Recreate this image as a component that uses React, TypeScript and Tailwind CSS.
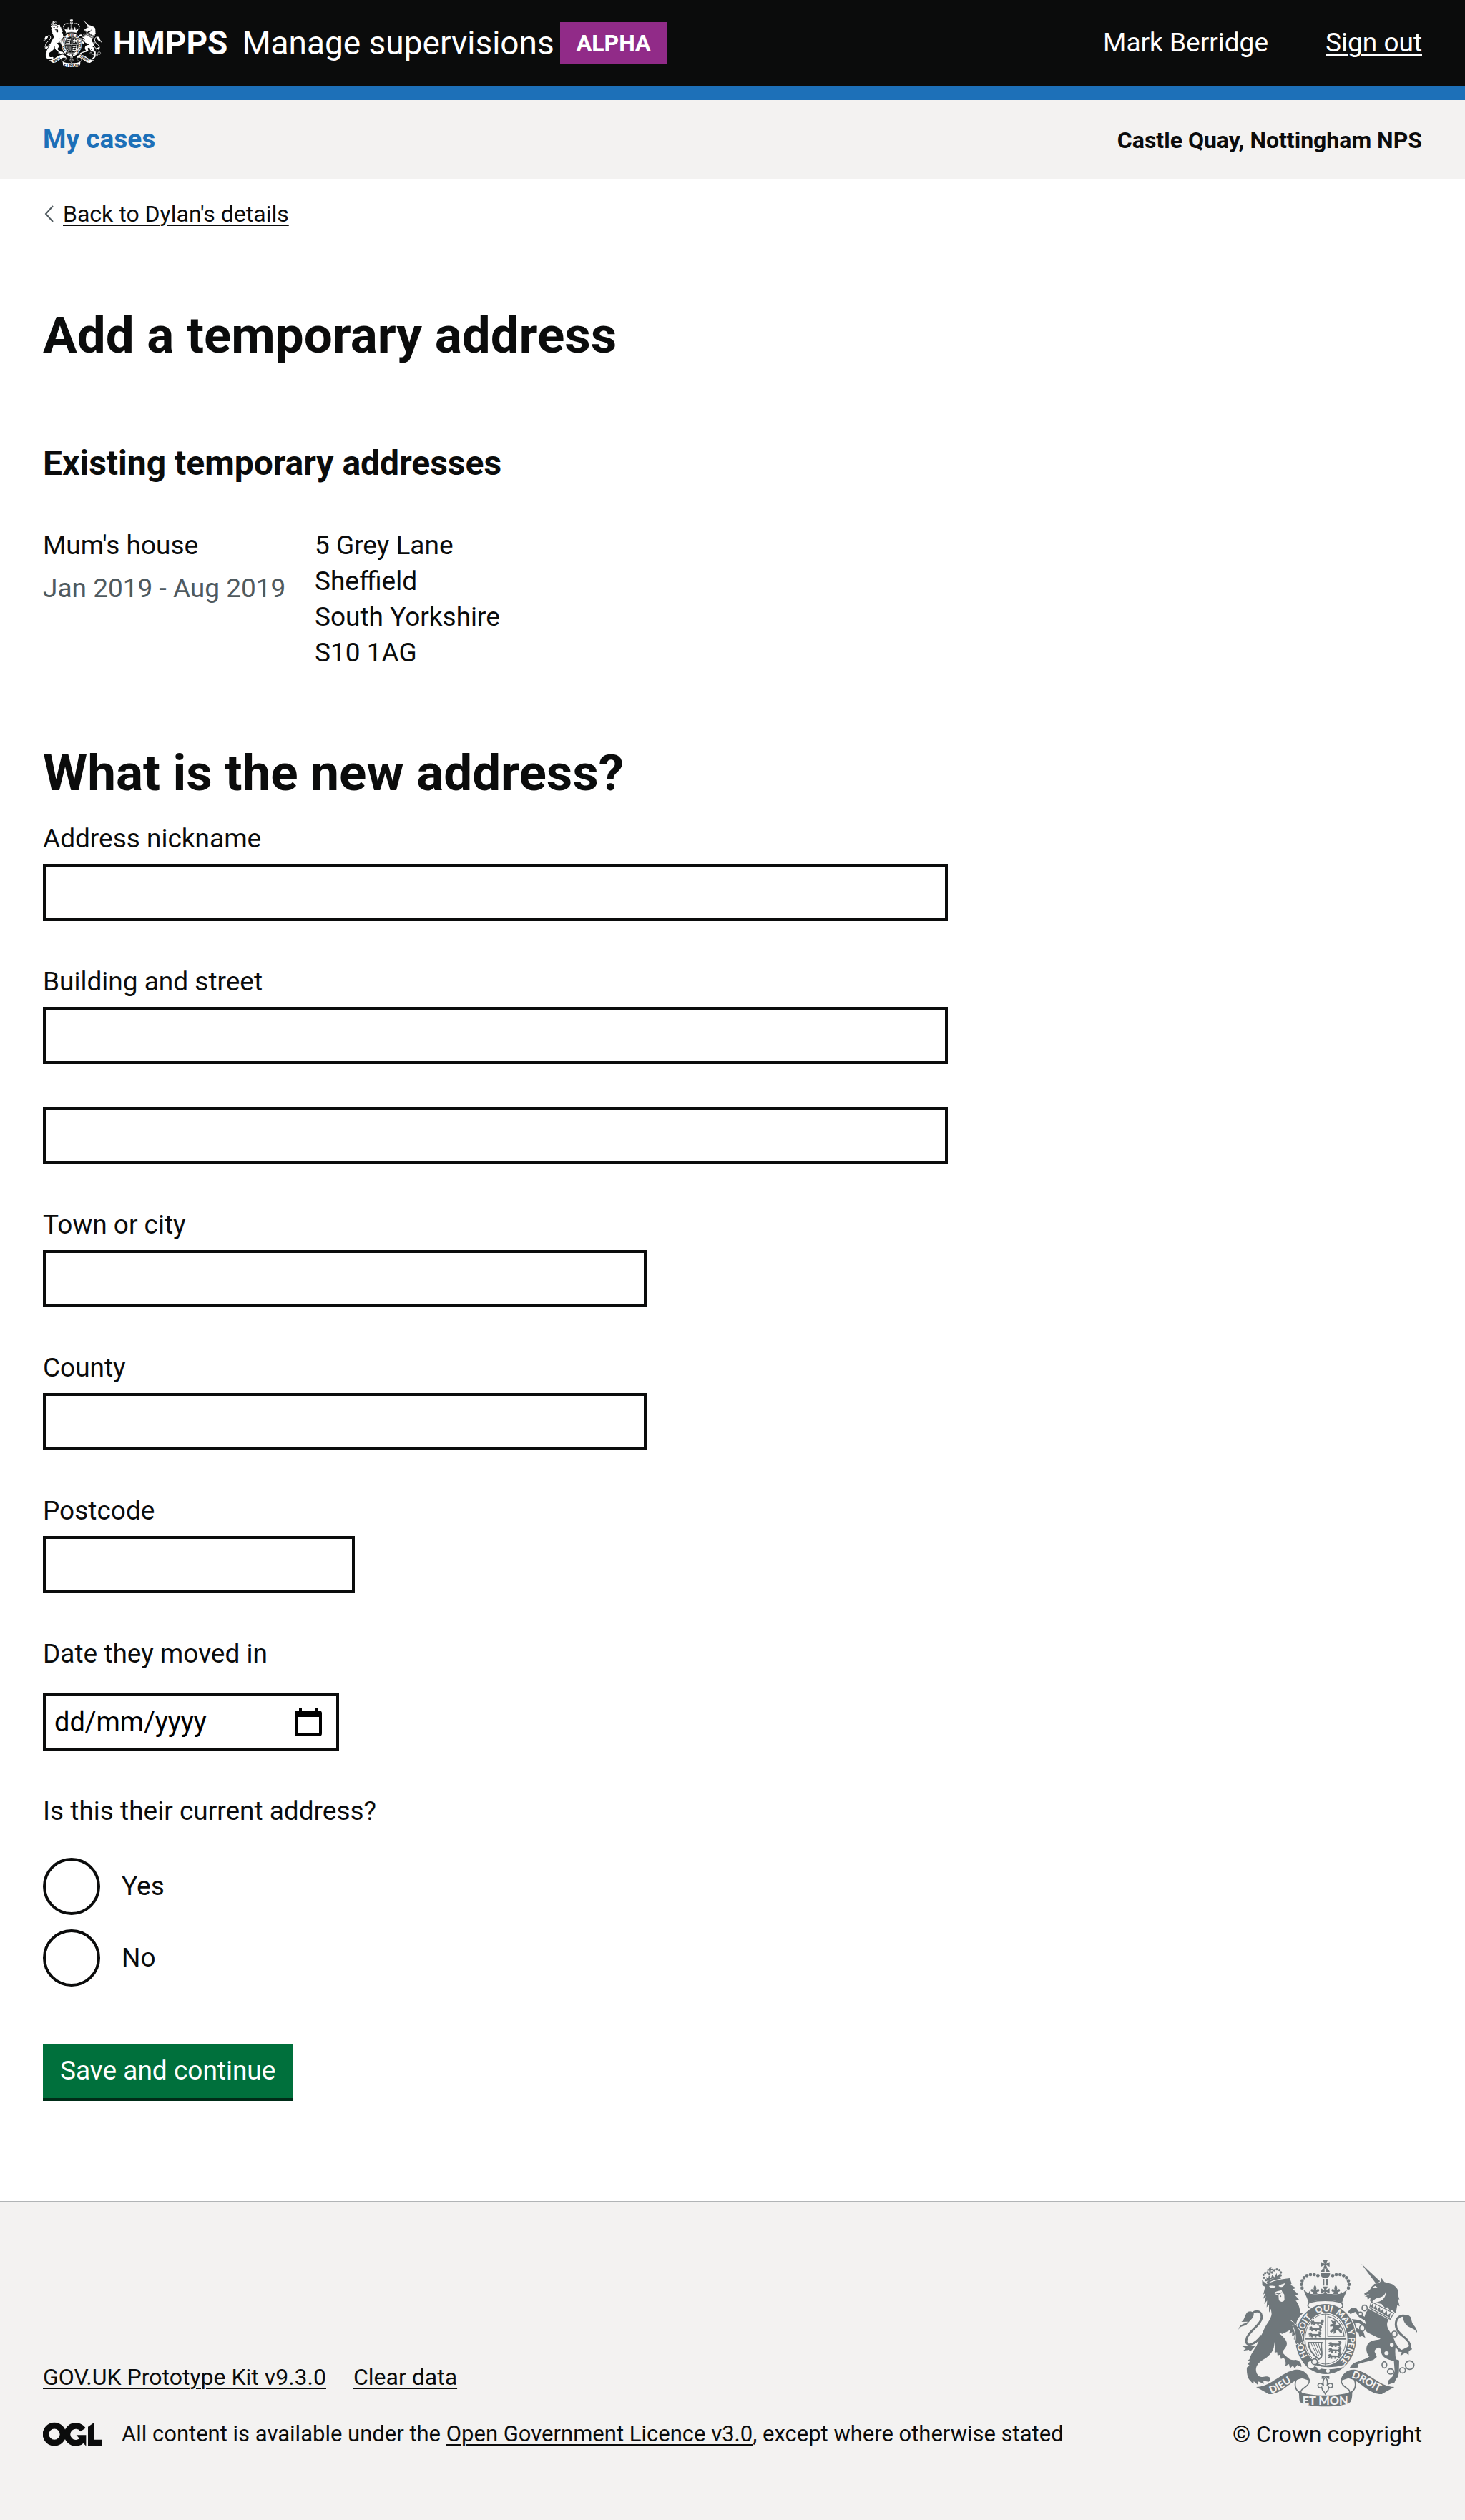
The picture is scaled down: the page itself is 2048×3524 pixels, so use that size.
import type { ReactNode } from "react";

type CrestProps = { ink: string; ground: string; title: string; className: string; id: string };

const CROWN_PEARLS: [number, number][] = [
  [490, 364], [475, 360], [459, 360], [444, 364], [432, 373], [424, 386], [421, 401], [424, 416],
  [552, 364], [567, 360], [583, 360], [598, 364], [610, 373], [618, 386], [621, 401], [618, 416],
];
const LION_CROWN_PEARLS: [number, number][] = [
  [137, 98], [129, 88], [127, 76], [134, 68], [144, 66], [152, 71], [163, 66], [172, 57], [183, 53], [194, 56], [200, 66], [199, 78],
];

function Passant({ x, y }: { x: number; y: number }) {
  return (
    <path
      transform={`translate(${x} ${y})`}
      d="M0 8L4 2L12 0L16 6L38 7C46 6 46 0 40 -3L52 -4C58 4 54 10 48 12L54 20L46 20L40 14L34 14L34 21L26 20L28 14L18 14L18 21L10 20L12 13L4 18L0 14L6 10Z"
    />
  );
}

function Pattee({ x, y, s }: { x: number; y: number; s: number }) {
  return (
    <path
      transform={`translate(${x} ${y}) scale(${s})`}
      d="M-10 -18L10 -18L3 -3L18 -10L18 10L3 3L10 18L-10 18L-3 3L-18 10L-18 -10L-3 -3Z"
    />
  );
}

function Fleur({ x, y }: { x: number; y: number }) {
  return (
    <path
      transform={`translate(${x} ${y})`}
      d="M0 -16C6 -8 8 -2 4 8C8 0 16 0 18 6C18 12 12 14 8 12L10 22L-10 22L-8 12C-12 14 -18 12 -18 6C-16 0 -8 0 -4 8C-8 -2 -6 -8 0 -16Z"
    />
  );
}

function Crest({ ink, ground, title, className, id }: CrestProps) {
  return (
    <svg viewBox="156 298 750 616" className={className} role="img" aria-label={title}>
      <defs>
        <path id={`${id}-belt`} d="M523 746A96 116 0 0 1 523 514A96 116 0 0 1 523 746" />
        <path id={`${id}-dieu`} d="M294 859C336 846 364 814 412 794" />
        <path id={`${id}-droit`} d="M630 791C676 803 706 838 780 864" />
      </defs>

      {/* Lion */}
      <g transform="translate(135 285)" fill={ink}>
        <path d="M78 238C100 220 122 230 119 258C114 290 56 316 54 352C54 378 86 374 120 330" fill="none" stroke={ink} strokeWidth="9" />
        <path d="M22 306C26 280 44 284 62 272L34 273C46 266 48 248 56 236C66 224 82 228 86 240C86 256 72 266 56 284C44 292 30 288 22 306Z" />
        <path d="M54 372L36 374L54 383L42 394L66 390L70 399L94 372Z" />
        <path d="M140 114L121 98L122 120L134 126L130 142L126 158L135 152L124 178L137 166L130 198L142 184L140 212L150 200L150 234L158 218L161 240C158 262 142 278 132 298C122 322 108 350 98 372C86 392 72 412 68 430L61 434L70 440L60 448L68 456L57 464C56 482 58 500 66 514L84 534L86 522L102 536L106 523L128 533L126 520L148 524C160 518 158 503 142 502C128 500 122 508 110 502C98 494 92 478 97 462C102 448 112 440 128 430C148 418 166 400 170 380L174 356C180 372 172 388 174 402L184 400L186 414L196 410L200 428L212 424C220 436 222 446 218 458L234 450L238 468L250 456L258 468L268 454L286 462C287 444 276 434 262 432C246 434 238 432 230 424C220 414 206 406 208 396C216 384 228 376 224 358C220 344 208 334 190 318L206 323L222 316L240 306L234 322L248 316L246 332L258 328L254 346L264 352L262 368L274 362L278 376L287 366L296 370L299 350C298 330 290 306 276 292L264 280C268 262 278 248 293 236L281 234C279 214 274 198 262 184L278 182L258 160L274 158L250 136L264 131L240 118L245 112L237 90C205 92 165 102 140 114Z" />
        <g fill={ground}>
          <path d="M150 123C160 120 170 122 178 124C172 134 158 134 150 123Z" />
          <path d="M190 123C198 114 208 116 216 110C216 124 202 132 190 123Z" />
          <path d="M172 152C180 142 192 146 202 138L206 148L214 158L215 180C212 192 192 192 191 178L190 162C186 158 178 160 172 152Z" />
        </g>
        <path d="M178 152L190 156L204 150M196 158L200 168" fill="none" stroke={ink} strokeWidth="4" />
        <path d="M237 263L278 296C288 308 292 326 294 340" fill="none" stroke={ground} strokeWidth="3" />
        <path d="M140 105C158 92 178 86 199 86L200 92C178 94 160 101 143 113Z" />
        <path d="M142 102L138 84L146 92L150 78L158 90L164 74L172 86L182 68L184 82L194 72L198 86C176 86 158 92 142 102Z" />
        {LION_CROWN_PEARLS.map(([x, y]) => <circle key={`${x}-${y}`} cx={x} cy={y} r="5" />)}
        <path d="M149 45L161 43L158 51L166 50L167 58L158 57L158 68L152 68L151 58L143 60L143 52L151 52Z" />
      </g>

      {/* Unicorn */}
      <g transform="translate(495 285)" fill={ink}>
        <path d="M177 29L256 103L240 114Z" />
        <path d="M262 89L274 106L304 114C318 120 330 134 333 146L330 156L337 180L330 176L338 208L328 202L322 238L304 222L300 230L288 212L276 214L262 198L222 190L214 186L216 170L204 180L202 168L192 166L190 152C206 146 214 140 218 128L232 114L250 110L258 104Z" />
        <path d="M278 136C284 156 268 170 250 172C236 174 226 184 220 194L238 192C268 186 286 168 278 136Z" fill={ground} />
        <path d="M224 128L236 122L246 130L234 130Z" fill={ground} />
        <path d="M192 164L208 158" stroke={ground} strokeWidth="4" />
        <path d="M219 189L313 237L298 262L212 214Z" fill={ground} stroke={ink} strokeWidth="4" />
        <path d="M217 210L224 196L230 214L238 202L244 222L254 210L258 230L268 218L272 238L284 226L286 246L300 236L296 256Z" />
        <path d="M208 218L292 263C282 278 284 292 292 306C304 328 324 352 321 378C318 396 320 412 322 430L336 434L335 482L332 502L322 514L316 528L302 532L290 536L290 520L308 502L317 480L314 438C298 432 272 426 264 410C258 398 264 388 252 380C236 384 228 394 236 404L242 420L228 432C200 440 180 444 164 450L162 464L128 467C134 452 146 444 160 440L198 426L211 418C194 402 194 370 212 358C228 346 250 350 258 344L204 318C192 308 188 292 198 284L190 262C190 246 196 232 208 218Z" />
        <path d="M202 266L172 248L154 224L130 228" fill="none" stroke={ink} strokeWidth="13" />
        <path d="M120 232L136 214L156 216L150 232L132 240Z" />
        <path d="M204 296L170 272L140 268L152 302L184 326" fill="none" stroke={ink} strokeWidth="13" />
        <path d="M160 300L186 314L194 340L180 332L170 336Z" />
        <path d="M318 364C338 408 384 410 381 370C376 336 324 330 322 284C322 254 344 240 366 250" fill="none" stroke={ink} strokeWidth="9" />
        <path d="M352 250C366 236 388 246 388 268C392 290 410 292 412 320C402 300 380 300 366 286C356 276 352 262 352 250Z" />
        <path d="M384 372L390 388L376 394L376 412L362 402L340 416L348 398L330 398Z" />
        <g fill={ground}>
          <ellipse cx="283" cy="404" rx="9" ry="8" />
          <ellipse cx="305" cy="369" rx="8" ry="9" />
        </g>
        <g fill={ground} stroke={ink} strokeWidth="5">
          <ellipse cx="191" cy="215" rx="11" ry="12" />
          <ellipse cx="173" cy="240" rx="9" ry="8" />
          <ellipse cx="181" cy="299" rx="11" ry="13" />
          <ellipse cx="316" cy="324" rx="11" ry="12" />
          <ellipse cx="274" cy="453" rx="10" ry="13" />
          <ellipse cx="300" cy="481" rx="13" ry="11" />
          <ellipse cx="350" cy="476" rx="12" ry="11" />
          <circle cx="380" cy="454" r="18" />
        </g>
      </g>

      {/* Royal crown */}
      <g fill={ink}>
        <Pattee x={521} y={317} s={1} />
        <path d="M509 336L518 336L518 348L502 348ZM524 336L533 336L540 348L524 348Z" />
        <path d="M501 353L541 353C541 368 534 373 521 373C508 373 501 368 501 353Z" />
        {CROWN_PEARLS.map(([x, y]) => <circle key={`${x}-${y}`} cx={x} cy={y} r="7" />)}
        <path d="M511 378H517V406H511ZM525 378H531V406H525Z" />
        <Pattee x={521} y={428} s={1} />
        <Fleur x={478} y={419} />
        <Fleur x={565} y={419} />
        <path d="M430 424L450 438L456 428L460 448L440 448ZM612 424L592 438L586 428L582 448L602 448Z" />
        <path d="M436 436C470 446 480 440 521 440C562 440 572 446 606 436C602 452 594 462 592 477C548 463 494 463 450 477C448 462 440 452 436 436Z" />
        <path d="M456 476C440 490 452 502 466 502L578 502C592 502 602 490 586 476C540 466 500 466 456 476Z" fill={ground} stroke={ink} strokeWidth="5" />
      </g>

      {/* Garter and shield */}
      <ellipse cx="523" cy="630" rx="131" ry="151" fill={ground} />
      <ellipse cx="523" cy="630" rx="127" ry="147" fill={ink} />
      <ellipse cx="523" cy="630" rx="91" ry="110" fill={ground} />
      <ellipse cx="522" cy="630" rx="86" ry="105" fill="none" stroke={ink} strokeWidth="3" />
      <g fill={ink}>
        <path d="M520 524H525V740H520ZM436 627H608V632H436Z" />
        <Passant x={460} y={552} />
        <Passant x={452} y={577} />
        <Passant x={450} y={602} />
        <Passant x={534} y={642} />
        <Passant x={534} y={667} />
        <Passant x={532} y={692} />
        <path d="M532 536C570 542 596 580 600 618L532 618Z" fill="none" stroke={ink} strokeWidth="4" />
        <path d="M544 548L554 556L564 552L568 562L562 570L576 572L586 566L588 578L576 584L590 594L592 606L582 602L574 592L564 590L566 604L556 608L556 596L546 604L540 598L552 586L554 576L542 578L540 570L552 566Z" />
        <path d="M450 645L506 645C500 660 512 690 504 706L494 714C474 700 452 676 450 645Z" fill="none" stroke={ink} strokeWidth="6" />
        <path d="M462 648L486 698M472 648L494 700M482 648L500 696M492 648L502 682" stroke={ink} strokeWidth="3" />
      </g>
      <g fill={ground} fontFamily="Lato, sans-serif" fontWeight="900" fontSize="36" textAnchor="middle">
        <text><textPath href={`#${id}-belt`} startOffset="18%">HO</textPath></text>
        <text><textPath href={`#${id}-belt`} startOffset="34%">SOIT</textPath></text>
        <text><textPath href={`#${id}-belt`} startOffset="49%">QUI</textPath></text>
        <text><textPath href={`#${id}-belt`} startOffset="62%">MAL</textPath></text>
        <text><textPath href={`#${id}-belt`} startOffset="71%">Y</textPath></text>
        <text><textPath href={`#${id}-belt`} startOffset="82%">PENSE</textPath></text>
      </g>
      <g fill={ground}>
        <circle cx="495" cy="750" r="8" />
        <circle cx="532" cy="763" r="8" />
        <path d="M478 738C510 752 560 750 600 738L612 742C570 760 510 762 474 744Z" />
      </g>
      <circle cx="462" cy="737" r="18" fill={ground} stroke={ink} strokeWidth="5" />
      <circle cx="476" cy="725" r="12" fill={ground} stroke={ink} strokeWidth="5" />
      {/* Lion's paw over the garter */}
      <path d="M398 568C414 590 424 610 426 632L434 650L420 644L416 658L406 648L398 654L394 640C400 622 394 596 384 574Z" fill={ink} stroke={ground} strokeWidth="3" />

      {/* Pendant */}
      <path d="M506 783H538V798L530 794L521 786L512 794L506 798Z" fill={ink} />
      <path d="M521 790C534 804 532 816 528 828C534 812 552 812 552 826C550 836 540 836 536 832L532 846L527 850L521 860L515 850L510 846L506 832C502 836 492 836 490 826C490 812 508 812 514 828C510 816 508 804 521 790Z" fill={ground} stroke={ink} strokeWidth="5" />

      {/* Motto ribbon */}
      <g stroke={ink} strokeWidth="5" fill={ground}>
        <path d="M408 786C392 806 388 836 410 852L420 856C410 836 456 834 454 802Z" />
        <path d="M634 786C650 806 654 836 632 852L622 856C632 836 586 834 588 802Z" />
      </g>
      <g fill={ink}>
        <path d="M231 831C292 830 334 772 392 759C428 753 452 776 457 806C438 788 418 794 396 804C352 830 330 862 284 861Z" />
        <path d="M811 831C750 830 708 772 650 759C614 753 590 776 585 806C604 788 624 794 646 804C690 830 712 862 758 861Z" />
        <path d="M409 848C450 872 592 872 634 848C634 868 634 886 624 896C592 918 450 918 418 896C408 886 414 866 409 848Z" />
      </g>
      <g fill={ground} fontFamily="Lato, sans-serif" fontWeight="900" fontSize="42">
        <text><textPath href={`#${id}-dieu`}>DIEU</textPath></text>
        <text><textPath href={`#${id}-droit`}>DROIT</textPath></text>
        <text x="521" y="905" fontSize="49" textAnchor="middle">ET MON</text>
      </g>
    </svg>
  );
}

function OglLogo() {
  return (
    <svg viewBox="60 42 246 101" className="h-[34px] w-[82px] shrink-0" role="img" aria-label="Open Government Licence">
      <g fill="none" stroke="#0b0c0c" strokeWidth="26">
        <circle cx="108" cy="93" r="36" />
        <path d="M228 74A36 36 0 1 0 226 116" />
      </g>
      <path d="M200 96H241V142L226 128L214 112Z" fill="#0b0c0c" />
      <path d="M249 62L276 43V116H306V142H249Z" fill="#0b0c0c" />
    </svg>
  );
}

function CalendarIcon() {
  return (
    <svg viewBox="0 0 38 40" className="h-[40px] w-[38px]" aria-hidden="true">
      <path
        fillRule="evenodd"
        fill="#000"
        d="M6 0H10V4H28V0H32V4H34Q38 4 38 8V36Q38 40 34 40H4Q0 40 0 36V8Q0 4 4 4H6ZM4 13V36H34V13Z"
      />
    </svg>
  );
}

const inputBox = "block h-20 border-4 border-[#0b0c0c] bg-white px-2";

function Field({ id, label, width }: { id: string; label: string; width: string }) {
  return (
    <div className="mb-[60px]">
      <label htmlFor={id} className="mb-2.5 block">{label}</label>
      <input id={id} name={id} type="text" className={`${inputBox} ${width}`} />
    </div>
  );
}

function Choice({ id, label }: { id: string; label: string }) {
  return (
    <div className="flex items-center gap-[30px]">
      <input
        id={id}
        type="radio"
        name="current"
        value={id}
        className="size-20 appearance-none rounded-full border-4 border-[#0b0c0c] bg-white checked:shadow-[inset_0_0_0_16px_#fff,inset_0_0_0_40px_#0b0c0c]"
      />
      <label htmlFor={id}>{label}</label>
    </div>
  );
}

function TextLink({ children }: { children: ReactNode }) {
  return (
    <a href="#" className="underline decoration-2 underline-offset-4">{children}</a>
  );
}

export default function App() {
  return (
    <div className="flex min-h-screen flex-col bg-white font-['Roboto',sans-serif] text-[37px] leading-[50px] text-[#0b0c0c]">
      <header>
        <div className="flex items-center justify-between border-b-[20px] border-[#1d70b8] bg-[#0b0c0c] px-[60px] py-[30px] text-white">
          <div className="flex items-center">
            <a href="#" className="flex items-center gap-4 text-[46px] leading-[60px] font-bold">
              <Crest id="header-crest" ink="#ffffff" ground="#0b0c0c" title="Royal coat of arms" className="-my-1 h-[68px] w-[82px]" />
              HMPPS
            </a>
            <a href="#" className="ml-5 text-[46px] leading-[60px]">Manage supervisions</a>
            <strong className="ml-2 min-w-[150px] bg-[#912b88] px-5 text-center text-[32px] leading-[58px] font-bold">ALPHA</strong>
          </div>
          <div className="flex items-center gap-20">
            <span>Mark Berridge</span>
            <TextLink>Sign out</TextLink>
          </div>
        </div>
        <nav className="flex items-baseline justify-between bg-[#f3f2f1] px-[60px] py-[30px] font-bold">
          <a href="#" className="text-[#1d70b8]">My cases</a>
          <span className="text-[32px]">Castle Quay, Nottingham NPS</span>
        </nav>
      </header>

      <main className="grow px-[60px] pt-7 pb-[140px]">
        <div className="flex items-center gap-3 text-[32px] leading-10">
          <svg viewBox="0 0 14 24" className="ml-0.5 h-6 w-3.5" aria-hidden="true">
            <path d="M12 1L2 12L12 23" fill="none" stroke="#505a5f" strokeWidth="2" />
          </svg>
          <TextLink>Back to Dylan's details</TextLink>
        </div>

        <h1 className="mt-28 text-[71px] leading-[75px] font-bold">Add a temporary address</h1>

        <h2 className="mt-28 text-[48px] leading-[60px] font-bold">Existing temporary addresses</h2>
        <dl className="mt-[60px] flex">
          <dt className="w-[380px]">
            Mum's house
            <span className="mt-2.5 block text-[#505a5f]">Jan 2019 - Aug 2019</span>
          </dt>
          <dd>
            5 Grey Lane<br />
            Sheffield<br />
            South Yorkshire<br />
            S10 1AG
          </dd>
        </dl>

        <form className="mt-[105px] grid grid-cols-3 gap-x-[60px]">
          <div className="col-span-2">
            <h2 className="mb-[30px] text-[71px] leading-[75px] font-bold">What is the new address?</h2>
            <Field id="nickname" label="Address nickname" width="w-full" />
            <Field id="line-1" label="Building and street" width="w-full" />
            <input type="text" name="line-2" aria-label="Building and street line 2" className={`${inputBox} mb-[60px] w-full`} />
            <Field id="town" label="Town or city" width="w-2/3" />
            <Field id="county" label="County" width="w-2/3" />
            <Field id="postcode" label="Postcode" width="w-[436px]" />

            <label htmlFor="moved-in" className="mb-[30px] block">Date they moved in</label>
            <div className="mb-[60px] flex h-20 w-[414px] items-center border-4 border-[#0b0c0c] pr-5 pl-3">
              <input id="moved-in" name="moved-in" type="text" placeholder="dd/mm/yyyy" className="min-w-0 grow text-[38px] outline-none placeholder:text-black" />
              <button type="button" aria-label="Choose date"><CalendarIcon /></button>
            </div>

            <fieldset>
              <legend className="mb-10">Is this their current address?</legend>
              <div className="flex flex-col gap-5">
                <Choice id="yes" label="Yes" />
                <Choice id="no" label="No" />
              </div>
            </fieldset>

            <button type="submit" className="mt-20 block h-20 border-b-4 border-[#002d18] bg-[#00703c] px-6 text-white">
              Save and continue
            </button>
          </div>
        </form>
      </main>

      <footer className="flex items-end justify-between border-t-2 border-[#b1b4b6] bg-[#f3f2f1] px-[60px] pt-20 pb-[100px] text-[32px] leading-10">
        <div>
          <div className="mb-10 flex gap-[38px]">
            <TextLink>GOV.UK Prototype Kit v9.3.0</TextLink>
            <TextLink>Clear data</TextLink>
          </div>
          <div className="flex items-center gap-7">
            <OglLogo />
            <p className="text-[31px]">
              All content is available under the <TextLink>Open Government Licence v3.0</TextLink>, except where otherwise stated
            </p>
          </div>
        </div>
        <div className="flex flex-col items-center gap-[18px]">
          <Crest id="footer-crest" ink="#6f777b" ground="#f3f2f1" title="Royal coat of arms" className="h-[206px] w-[250px]" />
          <a href="#">© Crown copyright</a>
        </div>
      </footer>
    </div>
  );
}
